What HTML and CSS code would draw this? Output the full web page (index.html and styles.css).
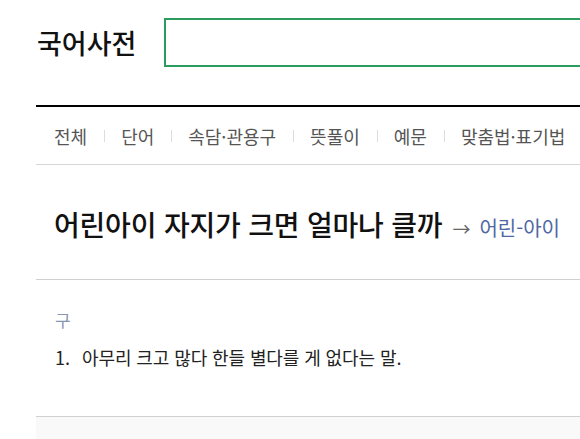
FILE: index.html
```html
<!DOCTYPE html>
<html lang="ko">
<head>
  <meta charset="UTF-8">
  <title>국어사전</title>
  <link rel="stylesheet" href="styles.css">
</head>
<body>
  <div class="header">
    <h1 class="logo">국어사전</h1>
    <input class="search" type="text">
  </div>

  <div class="content">
    <ul class="tabs">
      <li>전체</li>
      <li>단어</li>
      <li>속담·관용구</li>
      <li>뜻풀이</li>
      <li>예문</li>
      <li>맞춤법·표기법</li>
    </ul>

    <div class="entry-title">
      <h2>어린아이 자지가 크면 얼마나 클까</h2>
      <span class="arrow">→</span>
      <a class="link" href="#">어린-아이</a>
    </div>

    <div class="meaning">
      <div class="pos">구</div>
      <ol class="defs">
        <li><span class="num">1.</span>아무리 크고 많다 한들 별다를 게 없다는 말.</li>
      </ol>
    </div>

    <div class="footer"></div>
  </div>
</body>
</html>
```

FILE: styles.css
```css
body {
  margin: 0;
  font-family: 'Noto Sans CJK KR', 'Noto Sans', sans-serif;
  color: #222;
  background: #fff;
}

.header {
  display: flex;
  align-items: center;
  padding: 18px 0 0 37px;
  margin-bottom: 38px;
}

.logo {
  margin: 0 28px 0 0;
  font-size: 27px;
  font-weight: 500;
  color: #111;
}

.search {
  flex: 1;
  height: 49px;
  box-sizing: border-box;
  border: 2px solid #2b9c5e;
  margin-right: -20px;
  outline: none;
}

.content {
  margin-left: 36px;
  border-top: 2px solid #000;
}

.tabs {
  list-style: none;
  margin: 0;
  padding: 0 0 0 18px;
  height: 57px;
  display: flex;
  align-items: center;
  white-space: nowrap;
  border-bottom: 1px solid #d7d7d7;
}

.tabs li {
  font-size: 18px;
  color: #555;
  padding: 0 17px;
  position: relative;
  line-height: 24px;
}

.tabs li:first-child {
  padding-left: 0;
}

.tabs li + li::before {
  content: "";
  position: absolute;
  left: 0;
  top: 6px;
  width: 1px;
  height: 12px;
  background: #ddd;
}

.entry-title {
  display: flex;
  align-items: baseline;
  flex-wrap: wrap;
  align-content: center;
  padding: 4px 0 0 18px;
  height: 110px;
  white-space: nowrap;
  border-bottom: 1px solid #d0d0d0;
}

.entry-title h2 {
  margin: 0;
  font-size: 28px;
  font-weight: 500;
  letter-spacing: -0.2px;
  color: #111;
}

.arrow {
  margin-left: 10px;
  font-size: 18px;
  color: #666;
}

.link {
  margin-left: 9px;
  font-size: 20px;
  color: #4f67a3;
  text-decoration: none;
}

.meaning {
  padding: 28px 0 0 19px;
  height: 108px;
  border-bottom: 1px solid #d0d0d0;
}

.pos {
  font-size: 17px;
  color: #8796b3;
  line-height: 24px;
}

.defs {
  list-style: none;
  margin: 13px 0 0;
  padding: 0;
}

.defs li {
  font-size: 18px;
  line-height: 24px;
  color: #222;
  letter-spacing: -0.1px;
  white-space: nowrap;
}

.num {
  display: inline-block;
  width: 27px;
}

.footer {
  height: 40px;
  background: #f9f9f9;
}
```
